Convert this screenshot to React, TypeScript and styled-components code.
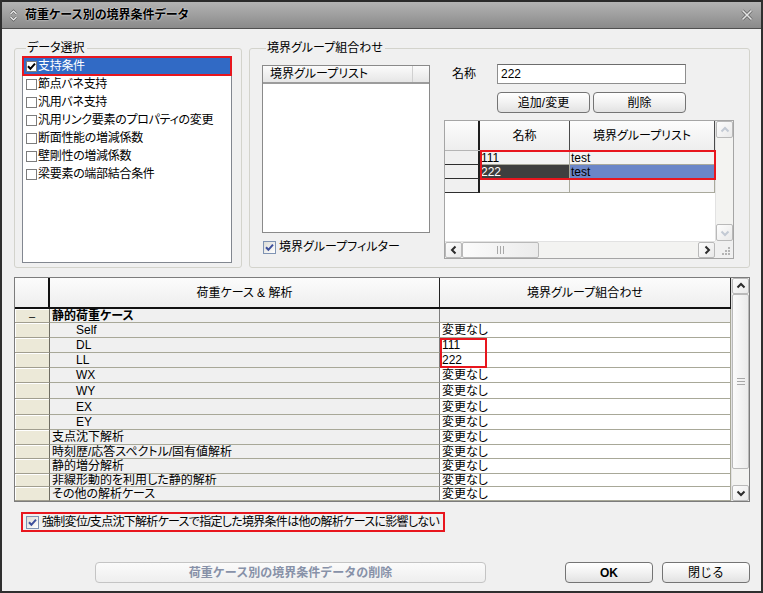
import React from 'react';
import styled, { createGlobalStyle, css } from 'styled-components';

const GlobalStyle = createGlobalStyle`
  html, body {
    margin: 0;
    padding: 0;
    background: #f0f0f0;
  }
  body {
    font-family: "Liberation Sans", "Noto Sans CJK JP", sans-serif;
    font-size: 12px;
    color: #000;
    font-feature-settings: "palt";
  }
  * {
    box-sizing: border-box;
  }
`;

const Window = styled.div`
  width: 763px;
  height: 593px;
  display: flex;
  flex-direction: column;
  background: #f0f0f0;
  border: 2px solid #2f2f2f;
  border-top: none;
  overflow: hidden;
`;

const TitleBar = styled.div`
  flex: none;
  height: 29px;
  display: flex;
  align-items: center;
  padding: 0 8px 0 7px;
  background: linear-gradient(#b3b3b3, #8a8a8a);
  border-top: 2px solid #2a2a2a;
  border-bottom: 1px solid #505050;
`;

const TitleText = styled.div`
  flex: 1;
  margin-left: 7px;
  font-weight: bold;
  font-size: 12px;
  line-height: 14px;
  color: #000;
  text-shadow: 0 0 2px rgba(255, 255, 255, 0.9);
`;

const Body = styled.div`
  flex: 1;
  display: flex;
  flex-direction: column;
  padding: 12px 11px 0 12px;
`;

const TopRow = styled.div`
  display: grid;
  grid-template-columns: 228px 1fr;
  column-gap: 7px;
`;

const GroupBox = styled.fieldset<{ $pad: string }>`
  margin: 0;
  min-width: 0;
  border: 1px solid #d3d3cc;
  border-radius: 3px;
  padding: ${(p) => p.$pad};
`;

const Legend = styled.legend`
  margin-left: 4px;
  padding: 0 2px 0 1px;
  line-height: 14px;
  font-size: 12px;
`;

const ListBox = styled.div`
  width: 210px;
  height: 207px;
  background: #fff;
  border: 1px solid #828790;
  display: flex;
  flex-direction: column;
`;

const ListItem = styled.div<{ $selected?: boolean }>`
  height: 18px;
  display: flex;
  align-items: center;
  padding-left: 3px;
  line-height: 14px;
  white-space: nowrap;
  letter-spacing: -0.3px;
  ${(p) =>
    p.$selected &&
    css`
      background: #316ac5;
      color: #fff;
      outline: 2px solid #e8161e;
      outline-offset: -1px;
    `}
`;

const Box = styled.span<{ $xp?: boolean }>`
  flex: none;
  display: inline-flex;
  align-items: center;
  justify-content: center;
  width: ${(p) => (p.$xp ? 13 : 11)}px;
  height: ${(p) => (p.$xp ? 13 : 11)}px;
  margin-right: ${(p) => (p.$xp ? 3 : 1)}px;
  background: ${(p) => (p.$xp ? 'linear-gradient(135deg, #dcdcd6, #ffffff)' : '#fff')};
  border: 1px solid ${(p) => (p.$xp ? '#7f93b3' : '#7c7c7c')};
`;

const ComboLayout = styled.div`
  display: flex;
  gap: 14px;
`;

const GroupListColumn = styled.div`
  width: 170px;
  display: flex;
  flex-direction: column;
  gap: 6px;
`;

const GroupList = styled.div`
  height: 168px;
  background: #fff;
  border: 1px solid #8a8a8a;
`;

const GroupListHead = styled.div`
  height: 18px;
  display: grid;
  grid-template-columns: 1fr 16px;
  border-bottom: 2px solid #9c9c9c;
  background: linear-gradient(#fbfbfb, #e6e6e6);
`;

const GroupListHeadCell = styled.div`
  padding-left: 7px;
  line-height: 16px;
  border-right: 1px solid #d0d0d0;
  &:last-child {
    border-right: none;
    margin-right: 1px;
  }
`;

const CheckLine = styled.label`
  display: flex;
  align-items: center;
  height: 16px;
  padding-left: 1px;
  line-height: 14px;
  white-space: nowrap;
`;

const PairColumn = styled.div`
  width: 290px;
  display: flex;
  flex-direction: column;
  margin-top: -1px;
`;

const NameRow = styled.div`
  display: flex;
  align-items: center;
  height: 20px;
  padding-left: 8px;
`;

const NameLabel = styled.span`
  width: 45px;
  line-height: 14px;
`;

const NameInput = styled.div`
  width: 189px;
  height: 20px;
  background: #fff;
  border: 1px solid #8e8e8e;
  border-top-color: #6c6c6c;
  padding-left: 3px;
  line-height: 18px;
`;

const ActionRow = styled.div`
  display: flex;
  gap: 3px;
  margin: 8px 0 0 53px;
`;

const Button = styled.button<{ $w: number; $bold?: boolean }>`
  width: ${(p) => p.$w}px;
  height: 21px;
  padding: 0;
  border: 1px solid #747474;
  border-radius: 4px;
  background: linear-gradient(#ffffff, #f2f2f2 50%, #e2e2e2);
  font-family: inherit;
  font-size: 12px;
  line-height: 14px;
  font-weight: ${(p) => (p.$bold ? 'bold' : 'normal')};
  color: #000;
  &:disabled {
    border-color: #c4c4c4;
    background: linear-gradient(#fbfbfb, #eeeeee);
    color: #8791a8;
  }
`;

const PairGrid = styled.div`
  margin-top: 7px;
  width: 290px;
  height: 139px;
  border: 1px solid #a5a5a5;
  background: #fff;
  display: grid;
  grid-template-columns: 270px 18px;
  grid-template-rows: 120px 17px;
`;

const GridArea = styled.div`
  display: flex;
  flex-direction: column;
  position: relative;
  min-width: 0;
`;

const HeadRow = styled.div<{ $cols: string; $h: number; $line: string }>`
  flex: none;
  display: grid;
  grid-template-columns: ${(p) => p.$cols};
  height: ${(p) => p.$h}px;
  border-bottom: ${(p) => p.$line};
`;

const HeadCell = styled.div<{ $edge: string }>`
  display: flex;
  align-items: center;
  justify-content: center;
  background: linear-gradient(#fcfcfc, #eeeeee);
  border-right: ${(p) => p.$edge};
  line-height: 14px;
  white-space: nowrap;
`;

const Rows = styled.div`
  position: relative;
  display: flex;
  flex-direction: column;
`;

const DataRow = styled.div<{ $cols: string; $h: number }>`
  display: grid;
  grid-template-columns: ${(p) => p.$cols};
  height: ${(p) => p.$h}px;
`;

const PairHead = styled.div`
  background: #f0f0f0;
  border-right: 2px solid #1e1e1e;
  border-bottom: 1px solid #2e2e2e;
`;

const PairCell = styled.div<{ $tone?: 'dark' | 'blue' }>`
  display: flex;
  align-items: center;
  padding-left: 1px;
  line-height: 12px;
  background: #f3f3f3;
  border-right: 1px solid #a9a99c;
  border-bottom: 1px solid #a9a99c;
  ${(p) =>
    p.$tone === 'dark' &&
    css`
      background: #3f3f3f;
      color: #fff;
    `}
  ${(p) =>
    p.$tone === 'blue' &&
    css`
      background: #6b86c8;
      color: #000;
    `}
`;

const Mark = styled.div<{ $left: number; $top: number; $w: number; $h: number }>`
  position: absolute;
  left: ${(p) => p.$left}px;
  top: ${(p) => p.$top}px;
  width: ${(p) => p.$w}px;
  height: ${(p) => p.$h}px;
  border: 2px solid #e8161e;
  pointer-events: none;
`;

const VScroll = styled.div`
  display: flex;
  flex-direction: column;
  background: #f3f3f1;
  border-left: 1px solid #e2e2e2;
`;

const HScroll = styled.div`
  display: flex;
  background: #f3f3f1;
  border-top: 1px solid #e2e2e2;
`;

const ScrollButton = styled.div<{ $size: number; $vertical?: boolean }>`
  flex: none;
  ${(p) => (p.$vertical ? `height: ${p.$size}px;` : `width: ${p.$size}px;`)}
  display: flex;
  align-items: center;
  justify-content: center;
  background: linear-gradient(135deg, #fdfdfd, #e9e9e9);
  border: 1px solid #b9b9b9;
  border-radius: 2px;
`;

const Thumb = styled(ScrollButton)`
  background: linear-gradient(90deg, #fbfbfb, #ebebeb);
`;

const Track = styled.div`
  flex: 1;
`;

const Corner = styled.div`
  background: #f0f0f0;
  display: flex;
  align-items: flex-end;
  justify-content: flex-end;
  padding: 2px;
`;

const CaseGrid = styled.div`
  margin-top: 9px;
  height: 225px;
  border: 1px solid #7c7c7c;
  background: #fff;
  display: grid;
  grid-template-columns: 1fr 18px;
`;

const CaseHead = styled.div`
  display: flex;
  align-items: center;
  justify-content: center;
  background: #ece9d8;
  box-shadow: inset 1px 1px 0 #fff;
  border-right: 1px solid #6f6d62;
  border-bottom: 1px solid #a19e8f;
  font-size: 11px;
  line-height: 10px;
`;

const CaseCell = styled.div<{ $bold?: boolean; $indent?: boolean; $shade?: boolean; $edge: string }>`
  display: flex;
  align-items: center;
  padding-left: ${(p) => (p.$indent ? 26 : 2)}px;
  line-height: 12px;
  white-space: nowrap;
  overflow: hidden;
  font-weight: ${(p) => (p.$bold ? 'bold' : 'normal')};
  background: ${(p) => (p.$shade ? '#f0f0f0' : '#fff')};
  border-right: 1px solid ${(p) => p.$edge};
  border-bottom: 1px solid #a8a898;
`;

const OptionRow = styled.div`
  margin: 10px 0 0 7px;
  width: 424px;
  height: 20px;
  display: flex;
  align-items: center;
  padding-left: 3px;
  border: 2px solid #e8161e;
  line-height: 14px;
  white-space: nowrap;
  letter-spacing: -0.7px;
`;

const FooterRow = styled.div`
  display: flex;
  align-items: center;
  margin-top: 30px;
  padding-left: 81px;
  gap: 9px;
`;

const Spacer = styled.div`
  flex: 1;
`;

type Dir = 'up' | 'down' | 'left' | 'right';

const chevronPaths: Record<Dir, string> = {
  up: 'M3.5 8.5 L7 5 L10.5 8.5',
  down: 'M3.5 5.5 L7 9 L10.5 5.5',
  left: 'M8.5 3.5 L5 7 L8.5 10.5',
  right: 'M5.5 3.5 L9 7 L5.5 10.5',
};

function Chevron({ dir, color = '#2c2c2c' }: { dir: Dir; color?: string }): JSX.Element {
  return (
    <svg width="14" height="14" viewBox="0 0 14 14">
      <path d={chevronPaths[dir]} fill="none" stroke={color} strokeWidth="2" />
    </svg>
  );
}

function CheckMark({ color }: { color: string }): JSX.Element {
  return (
    <svg width="9" height="9" viewBox="0 0 9 9">
      <path d="M1 4.2 L3.4 6.8 L8 1.6" fill="none" stroke={color} strokeWidth="2" />
    </svg>
  );
}

function Grip({ vertical }: { vertical?: boolean }): JSX.Element {
  return vertical ? (
    <svg width="8" height="7" viewBox="0 0 8 7">
      <path d="M0 0.5 H8 M0 3.5 H8 M0 6.5 H8" stroke="#a8a8a8" strokeWidth="1" />
    </svg>
  ) : (
    <svg width="7" height="8" viewBox="0 0 7 8">
      <path d="M0.5 0 V8 M3.5 0 V8 M6.5 0 V8" stroke="#a8a8a8" strokeWidth="1" />
    </svg>
  );
}

const selections = [
  { label: '支持条件', checked: true },
  { label: '節点バネ支持' },
  { label: '汎用バネ支持' },
  { label: '汎用リンク要素のプロパティの変更' },
  { label: '断面性能の増減係数' },
  { label: '壁剛性の増減係数' },
  { label: '梁要素の端部結合条件' },
];

const pairs: { name: string; list: string; selected?: boolean }[] = [
  { name: '111', list: 'test' },
  { name: '222', list: 'test', selected: true },
  { name: '', list: '' },
];

const cases: { label: string; value: string; h: number; group?: boolean; indent?: boolean }[] = [
  { label: '静的荷重ケース', value: '', h: 14, group: true },
  { label: 'Self', value: '変更なし', h: 15, indent: true },
  { label: 'DL', value: '111', h: 15, indent: true },
  { label: 'LL', value: '222', h: 15, indent: true },
  { label: 'WX', value: '変更なし', h: 15, indent: true },
  { label: 'WY', value: '変更なし', h: 16, indent: true },
  { label: 'EX', value: '変更なし', h: 16, indent: true },
  { label: 'EY', value: '変更なし', h: 15, indent: true },
  { label: '支点沈下解析', value: '変更なし', h: 15 },
  { label: '時刻歴/応答スペクトル/固有値解析', value: '変更なし', h: 14 },
  { label: '静的増分解析', value: '変更なし', h: 15 },
  { label: '非線形動的を利用した静的解析', value: '変更なし', h: 13 },
  { label: 'その他の解析ケース', value: '変更なし', h: 14 },
];

const PAIR_COLS = '35px 90px 145px';
const CASE_COLS = '35px 390px 1fr';

export default function App(): JSX.Element {
  return (
    <>
      <GlobalStyle />
      <Window>
        <TitleBar>
          <svg width="9" height="13" viewBox="0 0 9 13">
            <path d="M1.5 5 L4.5 2 L7.5 5 M1.5 8 L4.5 11 L7.5 8" fill="none" stroke="#5a5a5a" strokeWidth="2.4" />
            <path d="M1.5 5 L4.5 2 L7.5 5 M1.5 8 L4.5 11 L7.5 8" fill="none" stroke="#f2f2f2" strokeWidth="1.2" />
          </svg>
          <TitleText>荷重ケース別の境界条件データ</TitleText>
          <svg width="12" height="12" viewBox="0 0 12 12">
            <path d="M1.5 1.5 L10.5 10.5 M10.5 1.5 L1.5 10.5" stroke="#5e5e5e" strokeWidth="3" />
            <path d="M1.5 1.5 L10.5 10.5 M10.5 1.5 L1.5 10.5" stroke="#e4e4e4" strokeWidth="1.6" />
          </svg>
        </TitleBar>

        <Body>
          <TopRow>
            <GroupBox $pad="1px 9px 4px 7px">
              <Legend>データ選択</Legend>
              <ListBox>
                {selections.map((s) => (
                  <ListItem key={s.label} $selected={s.checked}>
                    <Box>{s.checked && <CheckMark color="#000" />}</Box>
                    {s.label}
                  </ListItem>
                ))}
              </ListBox>
            </GroupBox>

            <GroupBox $pad="10px 15px 8px 12px">
              <Legend>境界グループ組合わせ</Legend>
              <ComboLayout>
                <GroupListColumn>
                  <GroupList>
                    <GroupListHead>
                      <GroupListHeadCell>境界グループリスト</GroupListHeadCell>
                      <GroupListHeadCell />
                    </GroupListHead>
                  </GroupList>
                  <CheckLine>
                    <Box $xp>
                      <CheckMark color="#3d4f9c" />
                    </Box>
                    境界グループフィルター
                  </CheckLine>
                </GroupListColumn>

                <PairColumn>
                  <NameRow>
                    <NameLabel>名称</NameLabel>
                    <NameInput>222</NameInput>
                  </NameRow>
                  <ActionRow>
                    <Button type="button" $w={93}>
                      追加/変更
                    </Button>
                    <Button type="button" $w={93}>
                      削除
                    </Button>
                  </ActionRow>
                  <PairGrid>
                    <GridArea>
                      <HeadRow $cols={PAIR_COLS} $h={30} $line="1px solid #b5b5b5">
                        <HeadCell $edge="2px solid #1e1e1e" />
                        <HeadCell $edge="1px solid #4a4a4a">名称</HeadCell>
                        <HeadCell $edge="1px solid #4a4a4a">境界グループリスト</HeadCell>
                      </HeadRow>
                      <Rows>
                        {pairs.map((r, i) => (
                          <DataRow key={i} $cols={PAIR_COLS} $h={14}>
                            <PairHead />
                            <PairCell $tone={r.selected ? 'dark' : undefined}>{r.name}</PairCell>
                            <PairCell $tone={r.selected ? 'blue' : undefined}>{r.list}</PairCell>
                          </DataRow>
                        ))}
                        <Mark $left={35} $top={-1} $w={236} $h={30} />
                      </Rows>
                    </GridArea>
                    <VScroll>
                      <ScrollButton $vertical $size={17}>
                        <Chevron dir="up" color="#c3cad4" />
                      </ScrollButton>
                      <Track />
                      <ScrollButton $vertical $size={17}>
                        <Chevron dir="down" color="#c3cad4" />
                      </ScrollButton>
                    </VScroll>
                    <HScroll>
                      <ScrollButton $size={17}>
                        <Chevron dir="left" />
                      </ScrollButton>
                      <Thumb $size={77}>
                        <Grip />
                      </Thumb>
                      <Track />
                      <ScrollButton $size={17}>
                        <Chevron dir="right" />
                      </ScrollButton>
                    </HScroll>
                    <Corner>
                      <svg width="10" height="10" viewBox="0 0 10 10">
                        <g fill="#b4b4b4">
                          <rect x="7" y="1" width="2" height="2" />
                          <rect x="4" y="4" width="2" height="2" />
                          <rect x="7" y="4" width="2" height="2" />
                          <rect x="1" y="7" width="2" height="2" />
                          <rect x="4" y="7" width="2" height="2" />
                          <rect x="7" y="7" width="2" height="2" />
                        </g>
                      </svg>
                    </Corner>
                  </PairGrid>
                </PairColumn>
              </ComboLayout>
            </GroupBox>
          </TopRow>

          <CaseGrid>
            <GridArea>
              <HeadRow $cols={CASE_COLS} $h={31} $line="2px solid #111">
                <HeadCell $edge="2px solid #111" />
                <HeadCell $edge="1px solid #222">荷重ケース &amp; 解析</HeadCell>
                <HeadCell $edge="1px solid #222">境界グループ組合わせ</HeadCell>
              </HeadRow>
              <Rows>
                {cases.map((c) => (
                  <DataRow key={c.label} $cols={CASE_COLS} $h={c.h}>
                    <CaseHead>{c.group ? '–' : ''}</CaseHead>
                    <CaseCell $bold={c.group} $indent={c.indent} $shade $edge="#7d7d7d">
                      {c.label}
                    </CaseCell>
                    <CaseCell $shade={c.group} $edge="#a8a898">
                      {c.value}
                    </CaseCell>
                  </DataRow>
                ))}
                <Mark $left={425} $top={29} $w={47} $h={30} />
              </Rows>
            </GridArea>
            <VScroll>
              <ScrollButton $vertical $size={16}>
                <Chevron dir="up" />
              </ScrollButton>
              <Thumb $vertical $size={175}>
                <Grip vertical />
              </Thumb>
              <Track />
              <ScrollButton $vertical $size={16}>
                <Chevron dir="down" />
              </ScrollButton>
            </VScroll>
          </CaseGrid>

          <OptionRow>
            <Box $xp>
              <CheckMark color="#3d4f9c" />
            </Box>
            強制変位/支点沈下解析ケースで指定した境界条件は他の解析ケースに影響しない
          </OptionRow>

          <FooterRow>
            <Button type="button" $w={391} $bold disabled>
              荷重ケース別の境界条件データの削除
            </Button>
            <Spacer />
            <Button type="button" $w={88} $bold>
              OK
            </Button>
            <Button type="button" $w={88}>
              閉じる
            </Button>
          </FooterRow>
        </Body>
      </Window>
    </>
  );
}
